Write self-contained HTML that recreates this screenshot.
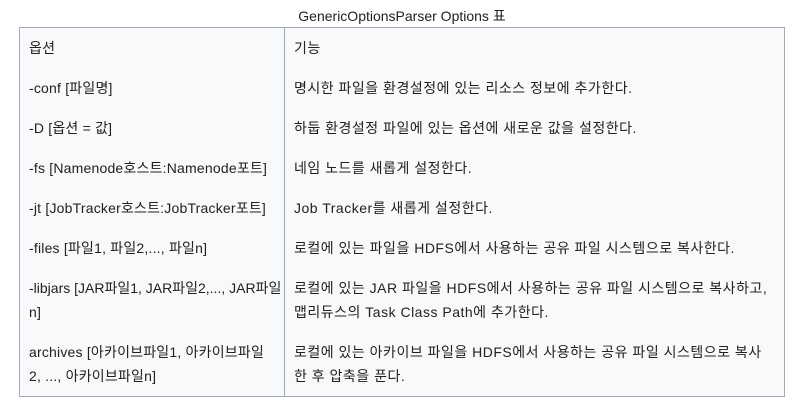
<!DOCTYPE html>
<html><head><meta charset="utf-8"><style>
body{margin:0;background:#fff;font-family:"Liberation Sans","Noto Sans CJK KR",sans-serif;color:#202122;font-size:14px}
.cap{position:absolute;top:5px;left:0;width:804px;text-align:center;line-height:22px;font-size:14px}
table{position:absolute;top:27px;left:19px;width:766px;border-collapse:collapse;background:#f8f9fa;border:1px solid #a2a9b1;table-layout:fixed;letter-spacing:0.5px}
td{padding:8px 9px;line-height:24px;vertical-align:top;border-left:1px solid #a2a9b1;white-space:nowrap}
td:first-child{width:246px;border-left:none;letter-spacing:0.2px}
.t{letter-spacing:0}
</style></head><body>
<div class="cap">GenericOptionsParser Options 표</div>
<table>
<tr><td>옵션</td><td>기능</td></tr>
<tr><td>-conf [파일명]</td><td>명시한 파일을 환경설정에 있는 리소스 정보에 추가한다.</td></tr>
<tr><td>-D [옵션 = 값]</td><td>하둡 환경설정 파일에 있는 옵션에 새로운 값을 설정한다.</td></tr>
<tr><td>-fs [Namenode호스트:Namenode포트]</td><td>네임 노드를 새롭게 설정한다.</td></tr>
<tr><td>-jt [JobTracker호스트:JobTracker포트]</td><td>Job Tracker를 새롭게 설정한다.</td></tr>
<tr><td>-files [파일1, 파일2,..., 파일n]</td><td>로컬에 있는 파일을 HDFS에서 사용하는 공유 파일 시스템으로 복사한다.</td></tr>
<tr><td><span class="t">-libjars [JAR파일1, JAR파일2,..., JAR파일</span><br>n]</td><td>로컬에 있는 JAR 파일을 HDFS에서 사용하는 공유 파일 시스템으로 복사하고,<br>맵리듀스의 Task Class Path에 추가한다.</td></tr>
<tr><td>archives [아카이브파일1, 아카이브파일<br>2, ..., 아카이브파일n]</td><td>로컬에 있는 아카이브 파일을 HDFS에서 사용하는 공유 파일 시스템으로 복사<br>한 후 압축을 푼다.</td></tr>
</table>
</body></html>
